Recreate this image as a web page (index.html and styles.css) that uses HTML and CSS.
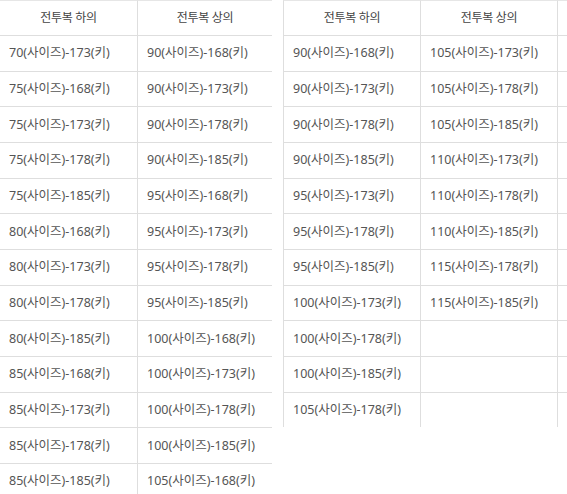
FILE: index.html
```html
<!DOCTYPE html>
<html lang="ko">
<head>
<meta charset="utf-8">
<link rel="stylesheet" href="styles.css">
</head>
<body>
<div class="wrap">
  <table class="size-table left">
    <colgroup><col class="c1"><col class="c2"></colgroup>
    <thead>
      <tr><th class="first">전투복 하의</th><th>전투복 상의</th></tr>
    </thead>
    <tbody>
      <tr><td class="first">70(사이즈)-173(키)</td><td>90(사이즈)-168(키)</td></tr>
      <tr><td class="first">75(사이즈)-168(키)</td><td>90(사이즈)-173(키)</td></tr>
      <tr><td class="first">75(사이즈)-173(키)</td><td>90(사이즈)-178(키)</td></tr>
      <tr><td class="first">75(사이즈)-178(키)</td><td>90(사이즈)-185(키)</td></tr>
      <tr><td class="first">75(사이즈)-185(키)</td><td>95(사이즈)-168(키)</td></tr>
      <tr><td class="first">80(사이즈)-168(키)</td><td>95(사이즈)-173(키)</td></tr>
      <tr><td class="first">80(사이즈)-173(키)</td><td>95(사이즈)-178(키)</td></tr>
      <tr><td class="first">80(사이즈)-178(키)</td><td>95(사이즈)-185(키)</td></tr>
      <tr><td class="first">80(사이즈)-185(키)</td><td>100(사이즈)-168(키)</td></tr>
      <tr><td class="first">85(사이즈)-168(키)</td><td>100(사이즈)-173(키)</td></tr>
      <tr><td class="first">85(사이즈)-173(키)</td><td>100(사이즈)-178(키)</td></tr>
      <tr><td class="first">85(사이즈)-178(키)</td><td>100(사이즈)-185(키)</td></tr>
      <tr><td class="first">85(사이즈)-185(키)</td><td>105(사이즈)-168(키)</td></tr>
    </tbody>
  </table>
  <table class="size-table right">
    <colgroup><col class="r1"><col class="r2"><col class="r3"></colgroup>
    <thead>
      <tr><th class="first">전투복 하의</th><th class="mid">전투복 상의</th><th></th></tr>
    </thead>
    <tbody>
      <tr><td class="first">90(사이즈)-168(키)</td><td class="mid">105(사이즈)-173(키)</td><td></td></tr>
      <tr><td class="first">90(사이즈)-173(키)</td><td class="mid">105(사이즈)-178(키)</td><td></td></tr>
      <tr><td class="first">90(사이즈)-178(키)</td><td class="mid">105(사이즈)-185(키)</td><td></td></tr>
      <tr><td class="first">90(사이즈)-185(키)</td><td class="mid">110(사이즈)-173(키)</td><td></td></tr>
      <tr><td class="first">95(사이즈)-173(키)</td><td class="mid">110(사이즈)-178(키)</td><td></td></tr>
      <tr><td class="first">95(사이즈)-178(키)</td><td class="mid">110(사이즈)-185(키)</td><td></td></tr>
      <tr><td class="first">95(사이즈)-185(키)</td><td class="mid">115(사이즈)-178(키)</td><td></td></tr>
      <tr><td class="first">100(사이즈)-173(키)</td><td class="mid">115(사이즈)-185(키)</td><td></td></tr>
      <tr><td class="first">100(사이즈)-178(키)</td><td class="mid"></td><td></td></tr>
      <tr><td class="first">100(사이즈)-185(키)</td><td class="mid"></td><td></td></tr>
      <tr class="last"><td class="first">105(사이즈)-178(키)</td><td class="mid"></td><td></td></tr>
    </tbody>
  </table>
</div>
</body>
</html>
```
FILE: styles.css
```css
html, body {
  margin: 0;
  padding: 0;
  background: #fff;
  overflow: hidden;
}
.wrap {
  display: flex;
  align-items: flex-start;
  gap: 11px;
  width: 567px;
  height: 494px;
  overflow: hidden;
}
.size-table {
  border-collapse: separate;
  border-spacing: 0;
  table-layout: fixed;
  font-family: "Noto Sans", "Noto Sans CJK KR", sans-serif;
  font-size: 12.5px;
  color: #555;
  flex: none;
}
.size-table.left { width: 272px; }
.size-table.left .c1 { width: 138px; }
.size-table.left .c2 { width: 134px; }
.size-table.right { width: 284px; }
.size-table.right .r1 { width: 138px; }
.size-table.right .r2 { width: 137px; }
.size-table.right .r3 { width: 9px; }

.size-table th,
.size-table td {
  padding: 0 0 0 9px;
  border-bottom: 1px solid #dedede;
  white-space: nowrap;
  overflow: hidden;
  vertical-align: middle;
  text-align: left;
  font-weight: normal;
  line-height: 18px;
}
.size-table th {
  border-top: 1px solid #e6e6e6;
  height: 34px;
  text-align: center;
  padding: 0;
  color: #444;
  font-size: 12px;
  letter-spacing: -0.3px;
}
.size-table td {
  height: 34.67px;
  box-sizing: content-box;
}
.size-table.left .first {
  border-right: 1px solid #dedede;
}
.size-table.right .first {
  border-left: 1px solid #dedede;
  border-right: 1px solid #dedede;
}
.size-table.right .mid {
  border-right: 1px solid #dedede;
}
.size-table.right tr.last td {
  border-bottom: none;
}
```
